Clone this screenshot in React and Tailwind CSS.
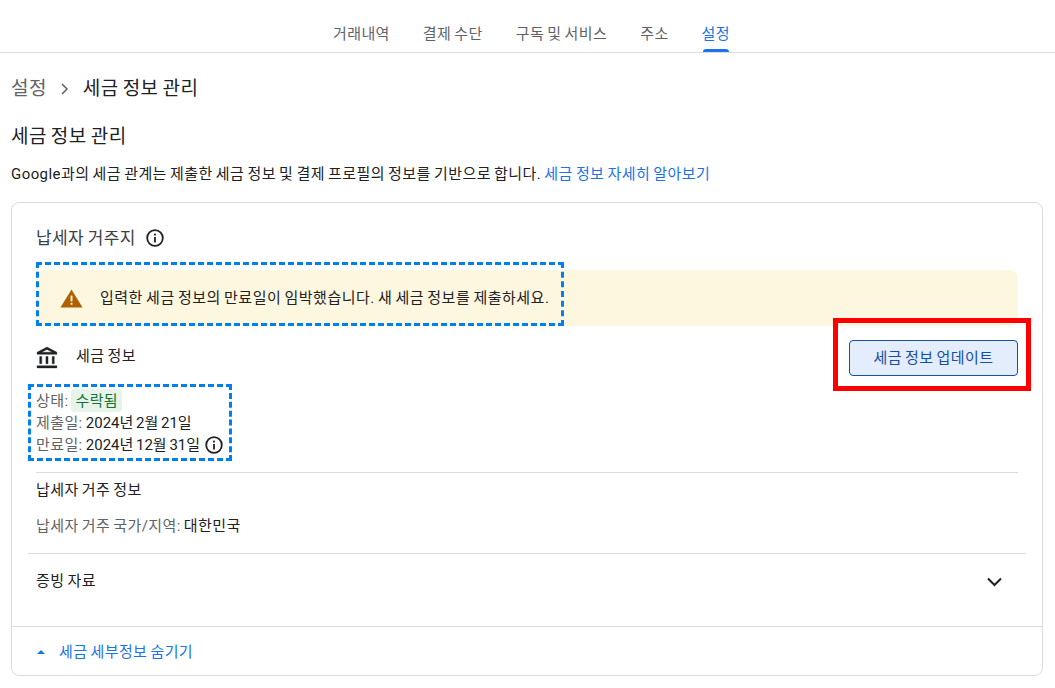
import React from 'react';

const InfoIcon = () => (
	<svg width="18" height="18" viewBox="0 0 18 18" fill="none" className="shrink-0">
		<circle cx="9" cy="9" r="7.8" stroke="#202124" strokeWidth="1.8" />
		<rect x="8.1" y="8" width="1.8" height="5.5" fill="#202124" />
		<rect x="8.1" y="4.6" width="1.8" height="1.9" fill="#202124" />
	</svg>
);

const tabs = ['거래내역', '결제 수단', '구독 및 서비스', '주소', '설정'];

const App = () => {
	return (
		<div className="h-[688px] w-[1055px] overflow-hidden bg-white font-['Roboto','Noto_Sans_CJK_KR',sans-serif] text-[#202124] tracking-[0.4px] [word-spacing:-1px]">
			<div className="flex h-[53px] justify-center gap-[33px] border-b border-[#dadce0] pl-[8px]">
				{tabs.map((tab) => (
					<div key={tab} className={`relative pt-[24px] text-[15px] leading-[20px] ${tab === '설정' ? 'text-[#1a73e8]' : 'text-[#5f6368]'}`}>
						{tab}
						{tab === '설정' && <div className="absolute bottom-0 left-[1px] right-[1px] h-[3px] rounded-t-[3px] bg-[#1a73e8]"></div>}
					</div>
				))}
			</div>

			<div className="mt-[22px] flex h-[28px] items-center pl-[11px] text-[19px]">
				<span className="text-[#5f6368]">설정</span>
				<svg width="10" height="14" viewBox="0 0 10 14" fill="none" className="ml-[13px] mr-[13px]">
					<path d="M2 2l5 5-5 5" stroke="#5f6368" strokeWidth="1.5" />
				</svg>
				<span>세금 정보 관리</span>
			</div>

			<div className="mt-[20px] pl-[11px] text-[19px] leading-[28px]">세금 정보 관리</div>
			<div className="mt-[13px] pl-[11px] text-[15px] leading-[20px] tracking-[0.43px]">
				Google과의 세금 관계는 제출한 세금 정보 및 결제 프로필의 정보를 기반으로 합니다. <span className="text-[#1a73e8]">세금 정보 자세히 알아보기</span>
			</div>

			<div className="relative ml-[11px] mt-[18px] h-[474px] w-[1032px] rounded-[8px] border border-[#dadce0]">
				<div className="flex items-center gap-[10px] pl-[24px] pt-[24px] text-[17px] leading-[22px] text-[#3c4043]">
					납세자 거주지
					<InfoIcon />
				</div>

				<div className="mx-[24px] mt-[21px] flex h-[56px] items-center rounded-[8px] bg-[#fef7e0] pl-[24px] text-[15px] tracking-[0.5px]">
					<svg width="23" height="22" viewBox="0 0 24 22" className="mr-[17px] shrink-0">
						<path d="M12 2L23.5 21H.5z" fill="#b06000" />
						<rect x="11" y="8.5" width="2" height="6" fill="#fef7e0" />
						<rect x="11" y="16" width="2" height="2" fill="#fef7e0" />
					</svg>
					입력한 세금 정보의 만료일이 임박했습니다. 새 세금 정보를 제출하세요.
				</div>

				<div className="mx-[24px] mt-[14px] flex items-start justify-between">
					<div className="flex items-start pt-[6px] text-[15px] leading-[20px]">
						<svg width="25" height="25" viewBox="0 0 24 24" className="-ml-[1px] mr-[16px]" fill="#202124" stroke="#202124" strokeWidth="0.4">
							<path d="M6.5 10h-2v7h2v-7zm6 0h-2v7h2v-7zm8.5 9H2v2h19v-2zm-2.5-9h-2v7h2v-7zm-7-6.74L16.71 6H6.29l5.21-2.74m0-2.26L2 6v2h19V6l-9.5-5z" />
						</svg>
						세금 정보
					</div>
					<div className="flex h-[36px] w-[169px] items-center justify-center rounded-[4px] border border-[#174ea6] bg-[#e3edfb] text-[15px] text-[#174ea6]">
						세금 정보 업데이트
					</div>
				</div>

				<div className="ml-[24px] mt-[13px] text-[15px] leading-[22px] text-[#5f6368]">
					<div className="flex items-center">
						상태:
						<span className="ml-[3px] flex h-[23px] items-center rounded-[4px] bg-[#e6f4ea] px-[4px] text-[#137333]">수락됨</span>
					</div>
					<div>제출일: <span className="tracking-normal text-[#202124]">2024년 2월 21일</span></div>
					<div className="flex items-center gap-[5px]">
						<span>만료일: <span className="tracking-normal text-[#202124]">2024년 12월 31일</span></span>
						<InfoIcon />
					</div>
				</div>

				<div className="mx-[24px] mt-[16px] border-t border-[#dadce0] pt-[7px] text-[15px] leading-[20px]">
					납세자 거주 정보
					<div className="mt-[16px] text-[#5f6368]">납세자 거주 국가/지역: <span className="text-[#202124]">대한민국</span></div>
				</div>

				<div className="mx-[16px] mt-[17px] flex h-[57px] items-center justify-between border-t border-[#dadce0] pl-[8px] pr-[24px] text-[15px]">
					<span className="-mt-[1px]">증빙 자료</span>
					<svg width="15" height="10" viewBox="0 0 15 10" fill="none">
						<path d="M1 1.5L7.5 8 14 1.5" stroke="#202124" strokeWidth="2" />
					</svg>
				</div>

				<div className="mt-[16px] flex h-[50px] items-center border-t border-[#dadce0] pl-[25px] pt-[1px] text-[15px] text-[#1a73e8]">
					<svg width="8" height="4" viewBox="0 0 8 4" className="mr-[14px]">
						<path d="M4 0l4 4H0z" fill="#1a73e8" />
					</svg>
					세금 세부정보 숨기기
				</div>

				<div className="absolute left-[24px] top-[59px] h-[64px] w-[528px] border-[3px] border-dashed border-[#0080f0]"></div>
				<div className="absolute left-[16px] top-[181px] h-[77px] w-[204px] border-[3px] border-dashed border-[#0080f0]"></div>
				<div className="absolute left-[821px] top-[115px] h-[73px] w-[198px] border-[5px] border-[#ff0000]"></div>
			</div>
		</div>
	);
};

export default App;
